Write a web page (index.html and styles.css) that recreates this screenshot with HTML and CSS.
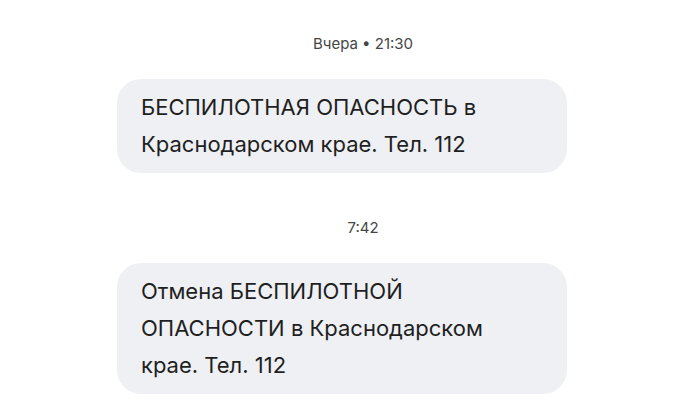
FILE: index.html
```html
<!DOCTYPE html>
<html lang="ru">
<head>
<meta charset="utf-8">
<link rel="stylesheet" href="styles.css">
</head>
<body>
<div class="thread">
  <div class="meta">Вчера • 21:30</div>
  <div class="bubble">БЕСПИЛОТНАЯ ОПАСНОСТЬ в<br>Краснодарском крае. Тел. 112</div>
  <div class="meta meta-second">7:42</div>
  <div class="bubble">Отмена БЕСПИЛОТНОЙ<br>ОПАСНОСТИ в Краснодарском<br>крае. Тел. 112</div>
</div>
</body>
</html>
```
FILE: styles.css
```css
html, body {
  margin: 0;
  padding: 0;
  background: #ffffff;
}
.thread {
  width: 688px;
  height: 400px;
  overflow: hidden;
  padding-top: 34px;
  box-sizing: border-box;
  display: flex;
  flex-direction: column;
  font-family: Inter, Roboto, sans-serif;
}
.meta {
  padding-left: 38px;
  text-align: center;
  font-size: 15px;
  line-height: 20px;
  color: #444746;
}
.meta-second {
  margin-top: 45px;
}
.bubble {
  margin: 25px 0 0 117px;
  width: 450px;
  box-sizing: border-box;
  padding: 10px 24px;
  background: #eef0f4;
  border-radius: 24px;
  font-size: 22px;
  line-height: 37px;
  color: #1f1f1f;
}
```
